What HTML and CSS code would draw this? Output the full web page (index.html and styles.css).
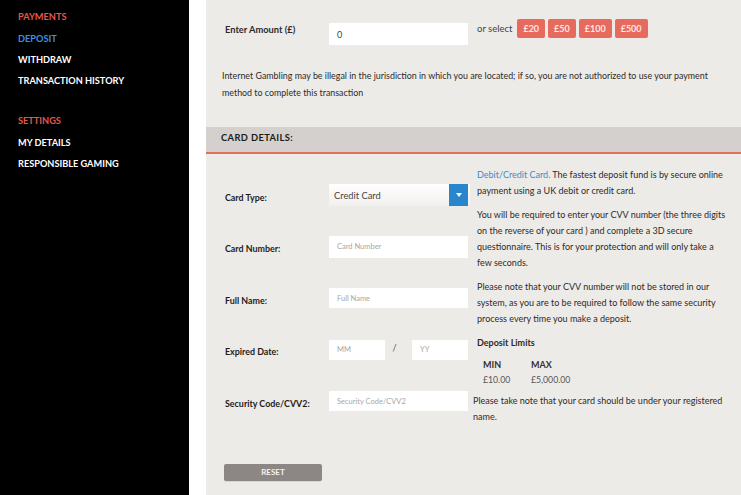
FILE: index.html
```html
<!DOCTYPE html>
<html>
<head>
<meta charset="utf-8">
<link rel="stylesheet" href="styles.css">
</head>
<body>
<div class="page">
  <nav class="sidebar">
    <div class="nav-group">
      <div class="nav-title">PAYMENTS</div>
      <a class="nav-item active">DEPOSIT</a>
      <a class="nav-item">WITHDRAW</a>
      <a class="nav-item">TRANSACTION HISTORY</a>
    </div>
    <div class="nav-group">
      <div class="nav-title">SETTINGS</div>
      <a class="nav-item">MY DETAILS</a>
      <a class="nav-item">RESPONSIBLE GAMING</a>
    </div>
  </nav>
  <main class="main">
    <section class="amount">
      <div class="amount-row">
        <label class="amount-label">Enter Amount (£)</label>
        <div class="input amount-input">0</div>
        <span class="or-select">or select</span>
        <div class="quick">
          <button class="qbtn">£20</button>
          <button class="qbtn">£50</button>
          <button class="qbtn">£100</button>
          <button class="qbtn">£500</button>
        </div>
      </div>
      <p class="disclaimer">Internet Gambling may be illegal in the jurisdiction in which you are located; if so, you are not authorized to use your payment<br>method to complete this transaction</p>
    </section>
    <div class="section-head">CARD DETAILS:</div>
    <section class="card">
      <div class="form">
        <div class="row">
          <span class="label">Card Type:</span>
          <div class="select"><span>Credit Card</span><span class="caret"><svg width="6" height="4" viewBox="0 0 6 4"><path d="M0 0h6L3 4z" fill="#fff"/></svg></span></div>
        </div>
        <div class="row">
          <span class="label">Card Number:</span>
          <div class="input ph">Card Number</div>
        </div>
        <div class="row">
          <span class="label">Full Name:</span>
          <div class="input ph short">Full Name</div>
        </div>
        <div class="row">
          <span class="label">Expired Date:</span>
          <div class="date">
            <div class="input ph short mm">MM</div>
            <span class="slash">/</span>
            <div class="input ph short yy">YY</div>
          </div>
        </div>
        <div class="row">
          <span class="label">Security Code/CVV2:</span>
          <div class="input ph short">Security Code/CVV2</div>
        </div>
        <button class="reset">RESET</button>
      </div>
      <div class="info">
        <p><span class="link">Debit/Credit Card.</span> The fastest deposit fund is by secure online<br>payment using a UK debit or credit card.</p>
        <p>You will be required to enter your CVV number (the three digits<br>on the reverse of your card ) and complete a 3D secure<br>questionnaire. This is for your protection and will only take a<br>few seconds.</p>
        <p>Please note that your CVV number will not be stored in our<br>system, as you are to be required to follow the same security<br>process every time you make a deposit.</p>
        <h4 class="limits-title">Deposit Limits</h4>
        <div class="limits">
          <div class="limit"><span class="lh">MIN</span><span class="lv">£10.00</span></div>
          <div class="limit"><span class="lh">MAX</span><span class="lv">£5,000.00</span></div>
        </div>
        <p class="last">Please take note that your card should be under your registered<br>name.</p>
      </div>
    </section>
  </main>
</div>
</body>
</html>
```
FILE: styles.css
```css
* { box-sizing: border-box; }
html, body { margin: 0; padding: 0; height: 100%; }
body {
  font-family: Lato, "Open Sans", sans-serif;
  color: #2d2a28;
  background: #fff;
  overflow: hidden;
}
.page {
  display: flex;
  gap: 17px;
  height: 495px;
}
.sidebar {
  width: 189px;
  flex: none;
  background: #000;
  padding: 6px 0 0 18px;
  display: flex;
  flex-direction: column;
  gap: 19px;
}
.nav-group { display: flex; flex-direction: column; }
.nav-title, .nav-item {
  font-size: 9.2px;
  font-weight: 700;
  line-height: 21px;
  height: 21px;
  color: #fff;
  text-decoration: none;
}
.nav-title { color: #e6574c; margin-bottom: 1px; }
.nav-item.active { color: #3f8fe0; }

.main {
  flex: 1;
  background: #edebe7;
  display: flex;
  flex-direction: column;
}
.amount { padding: 19px 0 0 16px; height: 127px; }
.amount-row { display: flex; align-items: flex-start; }
.amount-label {
  font-size: 9.3px;
  font-weight: 700;
  color: #2d2a28;
  width: 104px;
  margin: 4px 0 0 3px;
  line-height: 14px;
}
.input {
  background: #fff;
  height: 22px;
  width: 139px;
  font-size: 9px;
  padding-left: 8px;
  display: flex;
  align-items: center;
  color: #444;
}
.amount-input { margin-top: 4px; font-size: 9px; }
.or-select {
  font-size: 9.5px;
  color: #444;
  margin: 3px 0 0 9px;
  line-height: 14px;
}
.quick { display: flex; gap: 3px; margin-left: 5px; }
.qbtn {
  background: #e76a5c;
  border: 0;
  border-radius: 2px;
  color: #fbe7e4;
  font-family: inherit;
  font-weight: 700;
  font-size: 9px;
  height: 19px;
  padding: 0 6px;
  line-height: 19px;
}
.disclaimer {
  margin: 22px 0 0 0;
  font-size: 8.9px;
  line-height: 17px;
  color: #2d2a28;
  white-space: nowrap;
}
.section-head {
  background: #d3d0cd;
  height: 27px;
  border-bottom: 2px solid #e0705e;
  font-size: 9.3px;
  font-weight: 700;
  letter-spacing: 0.4px;
  padding: 5px 0 0 15px;
  color: #1d1b1a;
}
.card {
  display: flex;
  padding: 13px 0 0 19px;
}
.form {
  width: 253px;
  flex: none;
  padding-top: 17px;
  display: flex;
  flex-direction: column;
  gap: 29.5px;
}
.row {
  display: flex;
  align-items: center;
  height: 22px;
}
.label {
  width: 104px;
  font-size: 8.9px;
  font-weight: 700;
  color: #1d1b1a;
  padding-top: 4px;
}
.select {
  width: 141px;
  height: 22px;
  background: linear-gradient(#fff, #f1f0ee);
  display: flex;
  justify-content: space-between;
  align-items: center;
  font-size: 9.3px;
  color: #444;
  padding-left: 5px;
}
.caret {
  width: 19px;
  height: 22px;
  background: #2a86cc;
  display: flex;
  align-items: center;
  justify-content: center;
  margin-right: 2px;
}
.ph { color: #a9a6a3; font-size: 7.5px; }
.short { height: 20px; }
.date { display: flex; align-items: center; }
.mm { width: 56px; }
.yy { width: 56px; }
.slash { width: 27px; text-align: center; font-size: 9px; color: #555; padding-right: 8px; padding-bottom: 4px; }
.reset {
  margin-top: 22px;
  width: 98px;
  height: 17px;
  background: #8c8784;
  border: 0;
  border-radius: 2px;
  color: #f4f2f0;
  font-family: inherit;
  font-weight: 700;
  font-size: 8px;
  margin-left: -1px;
  box-shadow: 0 1px 0 #d8d5d2;
}
.info {
  width: 262px;
  margin-left: -1px;
  font-size: 9px;
  line-height: 16px;
  color: #2d2a28;
  white-space: nowrap;
}
.info p { margin: 0 0 8px; }
.link { color: #3a8bc9; }
.limits-title { margin: 8px 0 0; font-size: 9px; font-weight: 700; line-height: 16px; }
.limits { display: flex; gap: 20px; padding-left: 6px; margin-top: 6px; }
.limit { display: flex; flex-direction: column; line-height: 15px; }
.lh { font-weight: 700; font-size: 9px; color: #333; }
.lv { font-size: 8.7px; color: #555; }
.limit:first-child { width: 28px; }
.info p.last { margin: 6px 0 0 -4px; }
```
